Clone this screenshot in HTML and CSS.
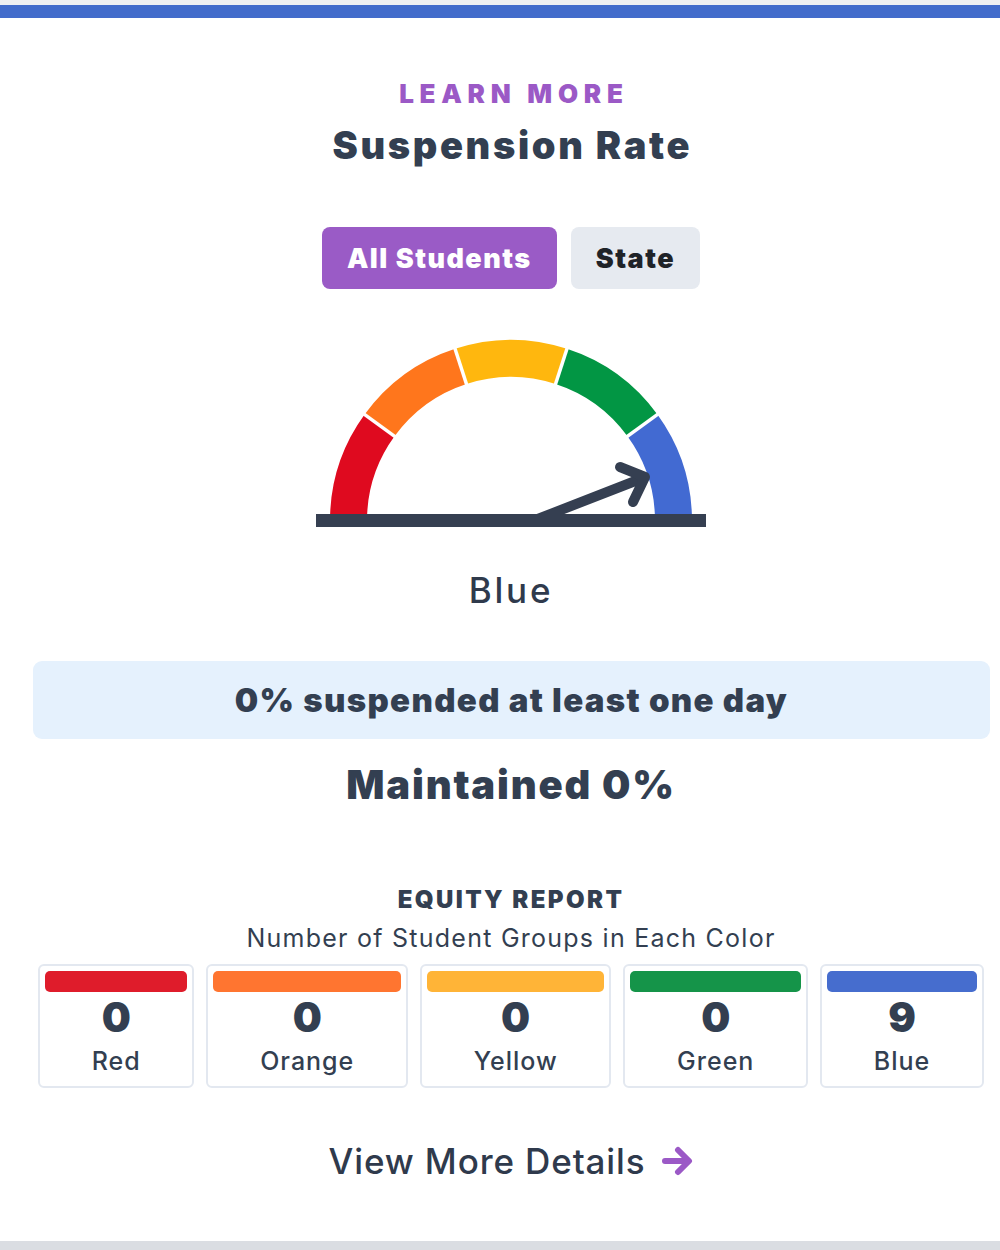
FILE: index.html
```html
<!DOCTYPE html>
<html lang="en">
<head>
<meta charset="utf-8">
<title>Suspension Rate</title>
<link rel="stylesheet" href="styles.css">
</head>
<body>
<div class="topline"></div>
<main class="card">
  <header class="head">
    <a class="learn">LEARN MORE</a>
    <h1 class="title">Suspension Rate</h1>
  </header>
  <div class="tabs">
    <button class="tab tab-active">All Students</button>
    <button class="tab">State</button>
  </div>
  <div class="gauge">
    <svg width="390" height="194" viewBox="0 0 390 194">
      <g fill="none" stroke-width="37">
        <path d="M32.5 185 A162.5 162.5 0 0 1 63.53 89.49" stroke="#df0a1f"/>
        <path d="M63.53 89.49 A162.5 162.5 0 0 1 144.78 30.45" stroke="#ff761c"/>
        <path d="M144.78 30.45 A162.5 162.5 0 0 1 245.22 30.45" stroke="#ffb70e"/>
        <path d="M245.22 30.45 A162.5 162.5 0 0 1 326.47 89.49" stroke="#029644"/>
        <path d="M326.47 89.49 A162.5 162.5 0 0 1 357.5 185" stroke="#426ad2"/>
      </g>
      <g stroke="#fff" stroke-width="3.5">
        <line x1="80.4" y1="101.7" x2="43.6" y2="74.9"/>
        <line x1="151" y1="49.8" x2="137" y2="6.5"/>
        <line x1="239" y1="49.8" x2="253" y2="6.5"/>
        <line x1="309.6" y1="101.7" x2="346.4" y2="74.9"/>
      </g>
      <g fill="none" stroke="#353f51" stroke-width="10" stroke-linecap="round" stroke-linejoin="round">
        <line x1="214" y1="186" x2="327" y2="142"/>
        <polyline points="304,131 329,141 317,166"/>
      </g>
      <rect x="0" y="178" width="390" height="13" fill="#353f51"/>
    </svg>
  </div>
  <div class="status">Blue</div>
  <div class="rate">0% suspended at least one day</div>
  <div class="change">Maintained 0%</div>
  <section class="equity">
    <h2 class="eq-title">EQUITY REPORT</h2>
    <p class="eq-sub">Number of Student Groups in Each Color</p>
    <div class="eq-row">
      <div class="eq-card"><span class="bar red"></span><span class="num">0</span><span class="lbl">Red</span></div>
      <div class="eq-card"><span class="bar orange"></span><span class="num">0</span><span class="lbl">Orange</span></div>
      <div class="eq-card"><span class="bar yellow"></span><span class="num">0</span><span class="lbl">Yellow</span></div>
      <div class="eq-card"><span class="bar green"></span><span class="num">0</span><span class="lbl">Green</span></div>
      <div class="eq-card"><span class="bar blue"></span><span class="num">9</span><span class="lbl">Blue</span></div>
    </div>
  </section>
  <a class="details">View More Details
    <svg width="32" height="32" viewBox="0 0 32 32"><g fill="none" stroke="#9b59c6" stroke-width="6" stroke-linecap="round" stroke-linejoin="round"><line x1="4" y1="16" x2="27" y2="16"/><polyline points="17,5 28,16 17,27"/></g></svg>
  </a>
</main>
<div class="bottomband"></div>
</body>
</html>
```
FILE: styles.css
```css
html, body {
  margin: 0;
  padding: 0;
  background: #ffffff;
}
body {
  font-family: Inter, "Noto Sans", sans-serif;
  color: #333f51;
  width: 1000px;
}
.topline {
  height: 5px;
  background: #f0f0f2;
}
.card {
  border-top: 13px solid #436ccb;
  display: flex;
  flex-direction: column;
  align-items: center;
  padding: 60px 0 0 22px;
  height: 1236px;
  box-sizing: border-box;
}
.head {
  display: flex;
  flex-direction: column;
  align-items: center;
}
.learn {
  font-size: 26px;
  font-weight: 900;
  color: #9b59c6;
  letter-spacing: 0.22em;
  margin-right: -0.22em;
  line-height: 32px;
}
.title {
  margin: 12px 0 0;
  font-size: 38px;
  font-weight: 900;
  line-height: 46px;
  letter-spacing: 0.07em;
  margin-right: -0.07em;
  color: #333f51;
}
.tabs {
  display: flex;
  gap: 14px;
  margin-top: 59px;
}
.tab {
  font-family: inherit;
  border: 0;
  border-radius: 8px;
  height: 62px;
  padding: 0 25px;
  font-size: 27px;
  font-weight: 900;
  background: #e6eaf0;
  color: #1f2328;
  letter-spacing: 0.055em;
}
.tab-active {
  background: #9a5bc6;
  color: #ffffff;
}
.gauge {
  margin-top: 47px;
  display: flex;
}
.status {
  margin-top: 38px;
  font-size: 35px;
  line-height: 44px;
  font-weight: 500;
  letter-spacing: 0.08em;
  color: #2f3a4c;
}
.rate {
  margin-top: 49px;
  align-self: stretch;
  margin-left: 11px;
  margin-right: 10px;
  height: 78px;
  border-radius: 9px;
  background: #e5f1fd;
  display: flex;
  align-items: center;
  justify-content: center;
  font-size: 33px;
  font-weight: 900;
  letter-spacing: 0.04em;
  color: #333f51;
}
.change {
  margin-top: 22px;
  font-size: 40px;
  font-weight: 900;
  letter-spacing: 0.045em;
  line-height: 48px;
}
.equity {
  margin-top: 76px;
  align-self: stretch;
  display: flex;
  flex-direction: column;
  align-items: center;
}
.eq-title {
  margin: 0;
  font-size: 24px;
  line-height: 30px;
  font-weight: 900;
  letter-spacing: 0.1em;
}
.eq-sub {
  margin: 8px 0 0;
  font-size: 25px;
  line-height: 30px;
  font-weight: 400;
  letter-spacing: 0.05em;
}
.eq-row {
  display: flex;
  gap: 12px;
  margin: 11px 16px 0 16px;
  align-self: stretch;
}
.eq-card {
  flex: 1 1 auto;
  border: 2px solid #e3e8f0;
  border-radius: 6px;
  padding: 5px 5px 8px;
  display: flex;
  flex-direction: column;
  align-items: center;
}
.bar {
  align-self: stretch;
  height: 21px;
  border-radius: 5px;
}
.red { background: #df1c2b; }
.orange { background: #ff7530; }
.yellow { background: #ffb437; }
.green { background: #159449; }
.blue { background: #466dce; }
.num {
  margin-top: 1px;
  font-size: 41px;
  line-height: 48px;
  font-weight: 900;
}
.lbl {
  margin-top: 3px;
  font-size: 25px;
  line-height: 34px;
  font-weight: 500;
  letter-spacing: 0.04em;
  padding: 0 26px;
}
.details {
  margin-top: 52px;
  display: flex;
  align-items: center;
  gap: 16px;
  font-size: 35px;
  font-weight: 500;
  letter-spacing: 0.025em;
  color: #2f3a4c;
}
.bottomband {
  height: 9px;
  background: #dadde2;
}
```
